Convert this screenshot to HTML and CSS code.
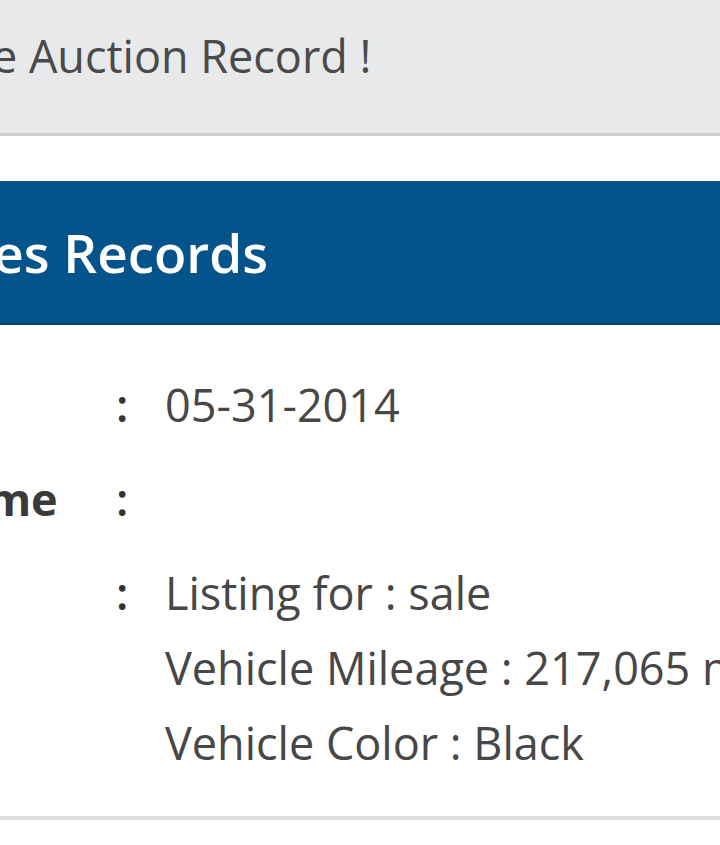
FILE: index.html
```html
<!DOCTYPE html>
<html lang="en">
<head>
<meta charset="utf-8">
<title>Auction Sales Records</title>
<link rel="stylesheet" href="styles.css">
</head>
<body>
<div class="crop">
  <div class="notice">
    <p class="notice-text">Online Auction Record !</p>
  </div>
  <div class="panel">
    <div class="panel-head">
      <h2 class="panel-title">Auction Sales Records</h2>
    </div>
    <div class="records">
      <div class="row">
        <div class="label">Sale Date</div>
        <div class="colon">:</div>
        <div class="value">05-31-2014</div>
      </div>
      <div class="row">
        <div class="label">Auction Name</div>
        <div class="colon">:</div>
        <div class="value"></div>
      </div>
      <div class="row">
        <div class="label">Details</div>
        <div class="colon">:</div>
        <div class="value">
          <div class="line">Listing for : sale</div>
          <div class="line">Vehicle Mileage : 217,065 miles</div>
          <div class="line">Vehicle Color : Black</div>
        </div>
      </div>
    </div>
  </div>
</div>
</body>
</html>
```

FILE: styles.css
```css
html, body {
  margin: 0;
  padding: 0;
  background: #ffffff;
  overflow: hidden;
}

body {
  font-family: "Open Sans", "Noto Sans", sans-serif;
  color: #474747;
  width: 720px;
  height: 845px;
}

.crop {
  margin-left: -300px;
  width: 1200px;
}

.notice {
  background: #e8e9eb;
  border-bottom: 3px solid #cfcfd0;
  height: 133px;
  box-sizing: content-box;
}

.notice-text {
  margin: 0;
  padding: 18px 0 0 179px;
  font-size: 45px;
  line-height: 75px;
  color: #4a4a4a;
  white-space: nowrap;
}

.panel {
  margin-top: 45px;
}

.panel-head {
  background: #04538b;
  height: 144px;
  display: flex;
  align-items: center;
  border-bottom: 2px solid #034373;
  box-sizing: border-box;
}

.panel-title {
  margin: 0;
  padding-left: 8px;
  font-size: 53px;
  font-weight: 600;
  color: #ffffff;
  white-space: nowrap;
}

.records {
  padding: 42px 0 36px;
  border-bottom: 4px solid #dcdcdc;
  display: flex;
  flex-direction: column;
  gap: 19px;
}

.row {
  display: grid;
  grid-template-columns: 384px 81px 1fr;
  font-size: 45px;
  line-height: 75px;
  min-height: 75px;
}

.label {
  padding-left: 37px;
  font-weight: 700;
  color: #3a3a3a;
  white-space: nowrap;
}

.colon {
  padding-left: 32px;
  font-weight: 600;
  color: #333333;
}

.value {
  white-space: nowrap;
  color: #474747;
}
```
